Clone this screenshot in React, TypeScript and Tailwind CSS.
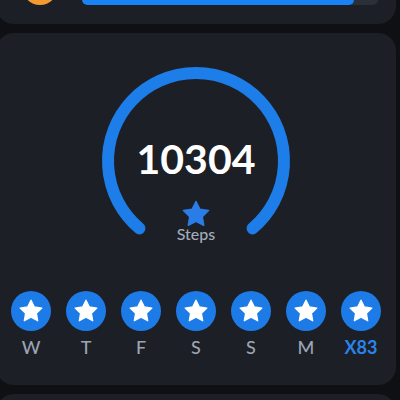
import React from "react";

const STAR =
  "M12 2l3.09 6.26L22 9.27l-5 4.87 1.18 6.88L12 17.77l-6.18 3.25L7 14.14 2 9.27l6.91-1.01L12 2z";

function Star({ size, color }: { size: number; color: string }) {
  return (
    <svg width={size} height={size} viewBox="0 0 24 24">
      <path d={STAR} fill={color} stroke={color} strokeWidth={1.2} strokeLinejoin="round" />
    </svg>
  );
}

const days = ["W", "T", "F", "S", "S", "M"];

export default function App() {
  return (
    <div
      className="h-[400px] w-[400px] overflow-hidden bg-[#0e1014]"
      style={{ fontFamily: "Lato, 'Noto Sans', sans-serif" }}
    >
      <div className="ml-[-4px] mt-[-36px] flex w-[400px] flex-col gap-[9px]">
        <div className="flex h-[60px] items-end gap-6 rounded-[18px] bg-[#1c1f25] pb-[19px] pl-[26px] pr-[18px]">
          <div className="h-9 w-9 shrink-0 rounded-full bg-[#f59a2f]" />
          <div className="h-[10px] flex-1 overflow-hidden rounded-full bg-[#2b2f37]">
            <div className="h-full w-[92%] rounded-full bg-[#1a82f7]" />
          </div>
        </div>

        <div className="flex h-[352px] flex-col items-center rounded-[18px] bg-[#1c1f25] pt-[28px]">
          <div className="relative h-[200px] w-[200px]">
            <svg className="absolute inset-0" width="200" height="200" viewBox="0 0 200 200">
              <path
                d="M43.43 167.41 A88 88 0 1 1 156.57 167.41"
                fill="none"
                stroke="#1d7de9"
                strokeWidth={12}
                strokeLinecap="round"
              />
            </svg>
            <div className="absolute left-0 right-0 top-[77px] text-center text-[41px] font-bold leading-[41px] text-white">
              10304
            </div>
            <div className="absolute left-[85px] top-[138px]">
              <Star size={30} color="#2a7de6" />
            </div>
            <div className="absolute left-0 right-0 top-[163px] text-center text-[16px] font-medium leading-[19px] text-[#a3abb9]">
              Steps
            </div>
          </div>

          <div className="mt-[30px] flex w-[385px]">
            {[...days, "X83"].map((d, i) => (
              <div key={i} className="flex w-[55px] flex-col items-center">
                <div className="flex h-10 w-10 items-center justify-center rounded-full bg-[#1d7be8]">
                  <Star size={26} color="#ffffff" />
                </div>
                <div
                  className={
                    i === 6
                      ? "mt-[6px] text-[18px] font-bold leading-[21px] text-[#2b83ea]"
                      : "mt-[6px] text-[18px] font-medium leading-[21px] text-[#9ba4b4]"
                  }
                >
                  {d}
                </div>
              </div>
            ))}
          </div>
        </div>

        <div className="h-[80px] rounded-[18px] bg-[#1c1f25]" />
      </div>
    </div>
  );
}
